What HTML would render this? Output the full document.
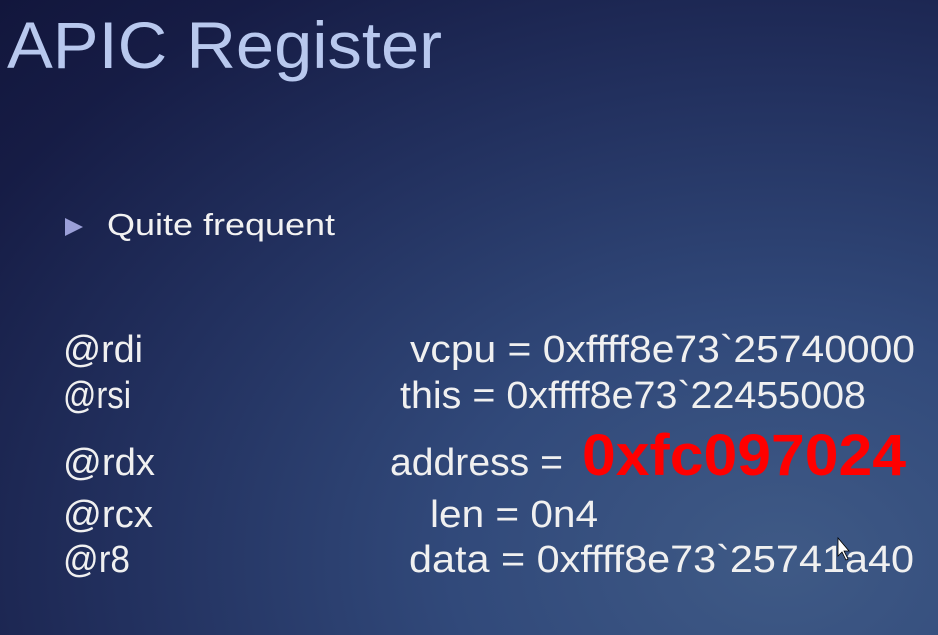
<!DOCTYPE html>
<html><head><meta charset="utf-8"><style>
html,body{margin:0;padding:0;}
body{width:938px;height:635px;overflow:hidden;background:radial-gradient(ellipse 1100px 800px at 780px 560px,#3f5a86 0%,#31497a 30%,#22305e 60%,#161c45 85%,#12163c 100%);}
svg{position:absolute;left:0;top:0;}
text{font-family:"Liberation Sans",sans-serif;}
</style></head><body>
<svg width="938" height="635">
<text x="7" y="68" font-size="66" fill="#b8c8ee" textLength="435" lengthAdjust="spacingAndGlyphs">APIC Register</text>
<polygon points="65,218 83,227 65,236" fill="#9a9fd8"/>
<text x="107" y="235" font-size="31" fill="#f2f2f2" textLength="228" lengthAdjust="spacingAndGlyphs">Quite frequent</text>
<g fill="#f0f0f0" font-size="38">
<text x="63" y="362" textLength="80" lengthAdjust="spacingAndGlyphs">@rdi</text>
<text x="63" y="408" textLength="68" lengthAdjust="spacingAndGlyphs">@rsi</text>
<text x="63" y="475" textLength="92" lengthAdjust="spacingAndGlyphs">@rdx</text>
<text x="63" y="527" textLength="90" lengthAdjust="spacingAndGlyphs">@rcx</text>
<text x="63" y="572" textLength="67" lengthAdjust="spacingAndGlyphs">@r8</text>
<text x="410" y="362" textLength="505" lengthAdjust="spacingAndGlyphs">vcpu = 0xffff8e73`25740000</text>
<text x="400" y="408" textLength="466" lengthAdjust="spacingAndGlyphs">this = 0xffff8e73`22455008</text>
<text x="390" y="475" textLength="173" lengthAdjust="spacingAndGlyphs">address =</text>
<text x="430" y="527" textLength="168" lengthAdjust="spacingAndGlyphs">len = 0n4</text>
<text x="409" y="572" textLength="505" lengthAdjust="spacingAndGlyphs">data = 0xffff8e73`25741a40</text>
</g>
<text x="582" y="475" font-size="58" font-weight="bold" fill="#ff0000" textLength="324" lengthAdjust="spacingAndGlyphs">0xfc097024</text>
<path d="M838,538 L838,556 L842,552 L846,560 L848,559 L844,551 L849,551 Z" fill="#fff" stroke="#000" stroke-width="0.8"/>
</svg>
</body></html>
